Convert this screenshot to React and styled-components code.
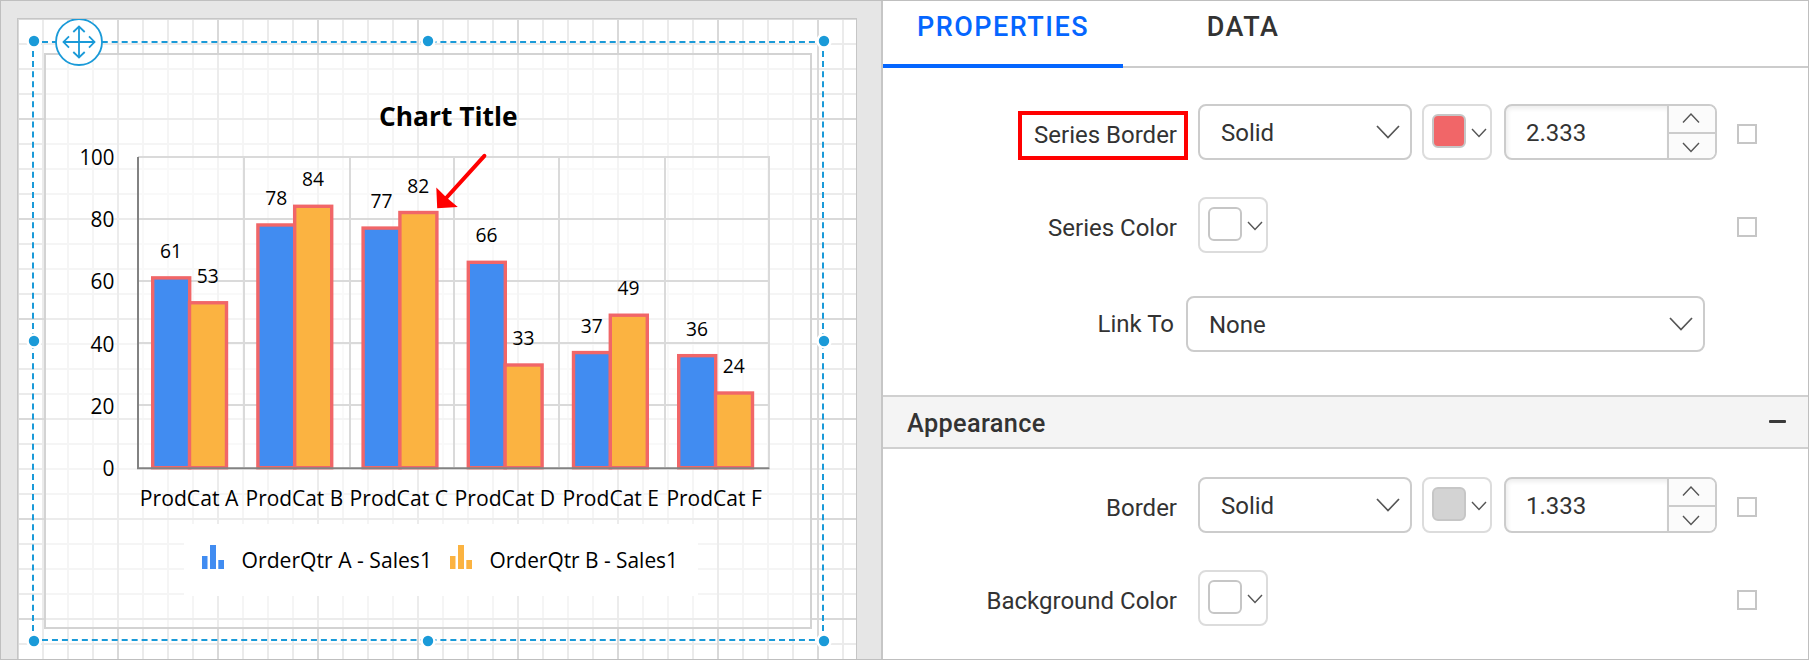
import React from "react";
import styled, { createGlobalStyle, css } from "styled-components";

const GlobalStyle = createGlobalStyle`
  * { box-sizing: border-box; }
  body { margin: 0; background: #fff; }
`;

const line = "#cccccc";
const accent = "#1a9ad8";

const Frame = styled.div`
  display: flex;
  width: 1809px;
  height: 660px;
  overflow: hidden;
  border: 1px solid #bfbfbf;
  background: #fff;
  color: #333;
  font-family: Roboto, "Liberation Sans", sans-serif;
  font-size: 24px;
`;

/* ---------- design surface ---------- */

const Surface = styled.main`
  flex: 0 0 880px;
  padding: 17px 24px 0 16px;
  background: #e6e6e6;
  overflow: hidden;
`;

const Paper = styled.div`
  position: relative;
  height: 660px;
  border: 1px solid #c6c6c6;
  background-color: #fff;
  background-image:
    linear-gradient(to right, #d9d9d9 2px, transparent 2px),
    linear-gradient(to bottom, #d9d9d9 2px, transparent 2px),
    linear-gradient(to right, #ebebeb 2px, transparent 2px),
    linear-gradient(to bottom, #ebebeb 2px, transparent 2px);
  background-size: 100px 100px, 100px 100px, 25px 25px, 25px 25px;
  background-position: 99px 0, 0 99px, 24px 0, 0 24px;
`;

const ReportItem = styled.section`
  position: absolute;
  left: 26px;
  top: 34px;
  width: 768px;
  height: 576px;
  border: 2px solid #d3d3d3;
  background: rgba(255, 255, 255, 0.5);
`;

const ChartSvg = styled.svg`
  display: block;
  width: 764px;
  height: 572px;
  font-family: "Open Sans", "Noto Sans", sans-serif;
  font-size: 21.3px;
  fill: #000;
`;

const SelectionSvg = styled.svg`
  position: absolute;
  left: 0;
  top: 0;
  width: 838px;
  height: 640px;
`;

const categories = [
  { name: "ProdCat A", x: 139.8, w: 98.6, a: 61, b: 53 },
  { name: "ProdCat B", x: 245.6, w: 97.6, a: 78, b: 84 },
  { name: "ProdCat C", x: 349.6, w: 98.4, a: 77, b: 82 },
  { name: "ProdCat D", x: 454.5, w: 100.6, a: 66, b: 33 },
  { name: "ProdCat E", x: 562.6, w: 96.4, a: 37, b: 49 },
  { name: "ProdCat F", x: 666.4, w: 95.4, a: 36, b: 24 },
];

const ticks = [
  { v: 100, y: 157, base: 164.7, w: 35 },
  { v: 80, y: 219, base: 226.7, w: 23.8 },
  { v: 60, y: 281, base: 288.7, w: 23.8 },
  { v: 40, y: 343, base: 351.5, w: 23.8 },
  { v: 20, y: 405, base: 413.5, w: 23.8 },
  { v: 0, y: 0, base: 475.5, w: 12 },
];

const columns = [244, 350, 454, 559, 665, 769];

const BASE = 467.7;
const UNIT = 3.112;

function Bar({ x, value, fill }) {
  const h = value * UNIT;
  return (
    <>
      <rect x={x} y={BASE - h} width="37" height={h} fill={fill} stroke="#f16668" strokeWidth="3.4" />
      <text x={x + 18.3} y={BASE - h - 20} textAnchor="middle" fontSize="19.8" textLength="22" lengthAdjust="spacingAndGlyphs">
        {value}
      </text>
    </>
  );
}

function LegendEntry({ x, fill, label, textLength }) {
  return (
    <g>
      <g fill={fill}>
        <rect x={x} y="556" width="5.5" height="13" />
        <rect x={x + 8} y="545" width="6" height="24" />
        <rect x={x + 16.3} y="560" width="5.7" height="9" />
      </g>
      <text x={x + 39.6} y="567.7" textLength={textLength} lengthAdjust="spacingAndGlyphs">
        {label}
      </text>
    </g>
  );
}

function Chart() {
  return (
    <ChartSvg viewBox="46 55 764 572">
      <rect x="138" y="157" width="631" height="310" fill="#fff" opacity="0.45" />
      <g stroke="#dadada" strokeWidth="2">
        {ticks.slice(0, 5).map((t) => (
          <line key={t.v} x1="138" x2="770" y1={t.y} y2={t.y} />
        ))}
        {columns.map((x) => (
          <line key={x} x1={x} x2={x} y1="157" y2="467" />
        ))}
      </g>
      <text x="379" y="126" fontSize="26.8" fontWeight="700" textLength="138.5" lengthAdjust="spacingAndGlyphs">
        Chart Title
      </text>
      {ticks.map((t) => (
        <text key={t.v} x={114.4 - t.w} y={t.base} textLength={t.w} lengthAdjust="spacingAndGlyphs">
          {t.v}
        </text>
      ))}
      {categories.map((c, i) => (
        <g key={c.name}>
          <Bar x={152.7 + 105.2 * i} value={c.a} fill="#418cf1" />
          <Bar x={189.5 + 105.2 * i} value={c.b} fill="#fbb341" />
          <text x={c.x} y="506" textLength={c.w} lengthAdjust="spacingAndGlyphs">
            {c.name}
          </text>
        </g>
      ))}
      <path d="M138 157V468.3H769.5" fill="none" stroke="#828282" strokeWidth="2" />
      <rect x="184" y="524" width="514" height="72" fill="#fff" />
      <LegendEntry x={202} fill="#418cf1" label="OrderQtr A - Sales1" textLength="190.4" />
      <LegendEntry x={450} fill="#fbb341" label="OrderQtr B - Sales1" textLength="188.4" />
      <path d="M484.4 155.8L443 201.5" stroke="#f00" strokeWidth="4" strokeLinecap="round" />
      <path d="M436.3 187.5L446.5 197.5L457.8 207L437.2 208.3Z" fill="#f00" />
    </ChartSvg>
  );
}

const handles = [
  [34, 41], [428, 41], [824, 41],
  [34, 341], [824, 341],
  [34, 641], [428, 641], [824, 641],
];

function Selection() {
  return (
    <SelectionSvg viewBox="18 19 838 640">
      <g stroke={accent} strokeWidth="2">
        <g strokeDasharray="6 3.96">
          <path d="M42 42H822" />
          <path d="M42 640H822" />
        </g>
        <g strokeDasharray="6 4.07">
          <path d="M33 51V632" />
          <path d="M823 51V632" />
        </g>
      </g>
      {handles.map(([x, y]) => (
        <circle key={`${x}-${y}`} cx={x} cy={y} r="6.5" fill={accent} stroke="#fff" strokeWidth="2.6" />
      ))}
      <g fill="none" stroke={accent} strokeWidth="1.8">
        <circle cx="79" cy="42" r="23" fill="#fff" />
        <path d="M79 27V57M64 42H94" />
        <path d="M73.3 32L79 26.5L84.7 32M73.3 52L79 57.5L84.7 52M69 36.3L63.5 42L69 47.7M89 36.3L94.5 42L89 47.7" />
      </g>
    </SelectionSvg>
  );
}

/* ---------- property panel ---------- */

const Panel = styled.aside`
  display: flex;
  flex-direction: column;
  flex: 1;
  border-left: 2px solid #c6c6c6;
`;

const Tabs = styled.nav`
  display: flex;
  height: 67px;
  box-shadow: inset 0 -2px ${line};
`;

const Tab = styled.div`
  width: 240px;
  height: 67px;
  padding-top: 8px;
  text-align: center;
  font-size: 27px;
  line-height: 36px;
  font-weight: 500;
  letter-spacing: 1.5px;
  color: ${(p) => (p.$active ? "#0566ff" : "#333")};
  border-bottom: ${(p) => (p.$active ? "4px solid #0566ff" : "0")};
`;

const Section = styled.div`
  display: flex;
  flex-direction: column;
  padding-top: ${(p) => p.$top}px;
`;

const Row = styled.div`
  display: flex;
  align-items: center;
  height: 56px;
  margin-bottom: ${(p) => p.$gap || 0}px;
`;

const LabelCell = styled.div`
  flex: none;
  display: flex;
  justify-content: flex-end;
  width: 305px;
  margin-right: ${(p) => (p.$tight ? -2 : 10)}px;
  padding-top: ${(p) => (p.$tight ? 0 : 7)}px;
`;

const Label = styled.span`
  height: 49px;
  line-height: 48px;
  padding-right: ${(p) => (p.$tight ? 14 : 11)}px;
  white-space: nowrap;
  ${(p) =>
    p.$marked &&
    css`
      width: 170px;
      border: 4px solid #f00;
      padding-right: 7px;
      line-height: 40px;
      text-align: right;
    `}
`;

const Control = styled.div`
  display: flex;
  align-items: center;
  height: 56px;
  border: 2px solid ${line};
  border-radius: 8px;
  background: #fff;
`;

const Select = styled(Control)`
  justify-content: space-between;
  width: ${(p) => p.$width}px;
  padding: 2px 10px 0 21px;
  line-height: 30px;

  svg { margin-bottom: 2px; }
`;

const Picker = styled(Control)`
  width: 70px;
  padding: 0 3px 2px 8px;
  justify-content: space-between;
  border-color: #dcdcdc;
  margin-right: 12px;

  svg { margin-top: 4px; }
`;

const Swatch = styled.span`
  width: 34px;
  height: 34px;
  border: 2px solid #c6c6c6;
  border-radius: 6px;
  background: ${(p) => p.$color};
`;

const NumberBox = styled(Control)`
  width: 213px;
  overflow: hidden;
  align-items: stretch;
`;

const NumberValue = styled.span`
  flex: 1;
  padding-left: 20px;
  line-height: 54px;
  box-shadow: inset 2px 3px 4px rgba(0, 0, 0, 0.07);
`;

const Spinner = styled.span`
  display: grid;
  grid-template-rows: 28px 24px;
  width: 48px;
  border-left: 2px solid ${line};
  background: #fbfbfb;
`;

const SpinButton = styled.span`
  display: flex;
  justify-content: center;
  align-items: flex-start;
  padding: ${(p) => (p.$up ? "7px 2px 0 0" : "8px 2px 0 0")};
  border-bottom: ${(p) => (p.$up ? `2px solid ${line}` : "0")};
`;

const Check = styled.span`
  width: 20px;
  height: 20px;
  margin: 4px 51px 0 auto;
  border: 2px solid #c6c6c6;
`;

const Gap = styled.span`
  width: 10px;
`;

const SectionHeader = styled.header`
  display: flex;
  flex: none;
  align-items: center;
  justify-content: space-between;
  height: 54px;
  padding: 2px 22px 0 24px;
  border: solid #d0d0d0;
  border-width: 2px 0;
  background: #f4f4f4;
  font-size: 25.3px;
  font-weight: 500;
  letter-spacing: 0.35px;
`;

const Minus = styled.span`
  width: 17px;
  height: 3px;
  margin-bottom: 3px;
  border-radius: 1px;
  background: #3a3a3a;
`;

function Chevron({ w, h, up, weight = 1.7 }) {
  const d = up ? `M1 ${h - 1}L${w / 2} 1L${w - 1} ${h - 1}` : `M1 1L${w / 2} ${h - 1}L${w - 1} 1`;
  return (
    <svg width={w} height={h} viewBox={`0 0 ${w} ${h}`} fill="none" stroke="#555" strokeWidth={weight}>
      <path d={d} />
    </svg>
  );
}

function ColorPicker({ color }) {
  return (
    <Picker>
      <Swatch $color={color} />
      <Chevron w={16} h={9.5} weight={1.4} />
    </Picker>
  );
}

function NumberInput({ value }) {
  return (
    <NumberBox>
      <NumberValue>{value}</NumberValue>
      <Spinner>
        <SpinButton $up><Chevron w={18} h={10.5} up weight={1.4} /></SpinButton>
        <SpinButton><Chevron w={18} h={10.5} weight={1.4} /></SpinButton>
      </Spinner>
    </NumberBox>
  );
}

function BorderRow({ label, marked, color, width }) {
  return (
    <Row $gap={37}>
      <LabelCell><Label $marked={marked}>{label}</Label></LabelCell>
      <Select $width={214}>Solid<Chevron w={24} h={13.5} /></Select>
      <Gap />
      <ColorPicker color={color} />
      <NumberInput value={width} />
      <Check />
    </Row>
  );
}

function ColorRow({ label, gap }) {
  return (
    <Row $gap={gap}>
      <LabelCell><Label>{label}</Label></LabelCell>
      <ColorPicker color="#fff" />
      <Check />
    </Row>
  );
}

export default function App() {
  return (
    <>
      <GlobalStyle />
      <Frame>
        <Surface>
          <Paper>
            <ReportItem><Chart /></ReportItem>
            <Selection />
          </Paper>
        </Surface>
        <Panel>
          <Tabs>
            <Tab $active>PROPERTIES</Tab>
            <Tab>DATA</Tab>
          </Tabs>
          <Section $top={36}>
            <BorderRow label="Series Border" marked color="#f16668" width="2.333" />
            <ColorRow label="Series Color" gap={43} />
            <Row $gap={43}>
              <LabelCell $tight><Label $tight>Link To</Label></LabelCell>
              <Select $width={519}>None<Chevron w={24} h={13.5} /></Select>
            </Row>
          </Section>
          <SectionHeader>Appearance<Minus /></SectionHeader>
          <Section $top={28}>
            <BorderRow label="Border" color="#d3d3d3" width="1.333" />
            <ColorRow label="Background Color" />
          </Section>
        </Panel>
      </Frame>
    </>
  );
}
